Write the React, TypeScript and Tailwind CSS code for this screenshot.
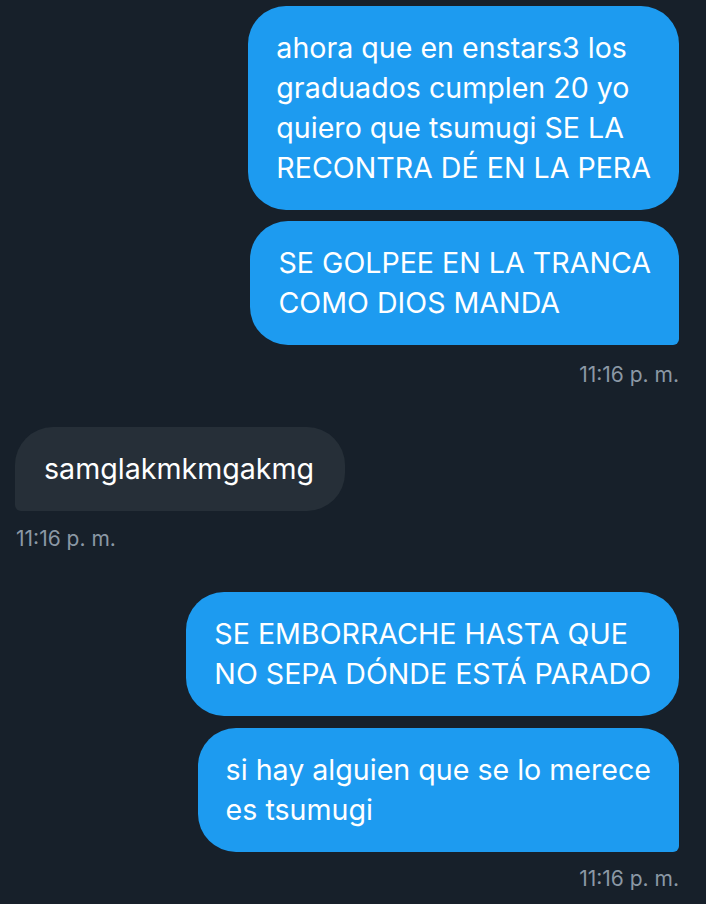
import React from "react";

type Msg = {
  lines: string[];
  corner?: boolean; // last in group: sharp corner on sender side
};

const firstGroup: Msg[] = [
  {
    lines: [
      "ahora que en enstars3 los",
      "graduados cumplen 20 yo",
      "quiero que tsumugi SE LA",
      "RECONTRA DÉ EN LA PERA",
    ],
  },
  { lines: ["SE GOLPEE EN LA TRANCA", "COMO DIOS MANDA"], corner: true },
];

const secondGroup: Msg[] = [
  { lines: ["SE EMBORRACHE HASTA QUE", "NO SEPA DÓNDE ESTÁ PARADO"] },
  { lines: ["si hay alguien que se lo merece", "es tsumugi"], corner: true },
];

function SentBubble({ msg }: { msg: Msg }) {
  return (
    <div
      className={`bg-[#1d9bf0] text-white px-[28px] py-[22px] rounded-[38px] ${
        msg.corner ? "rounded-br-[6px]" : ""
      }`}
    >
      {msg.lines.map((l, i) => (
        <div key={i} className="whitespace-nowrap">
          {l}
        </div>
      ))}
    </div>
  );
}

function Stamp({ right }: { right?: boolean }) {
  return (
    <div className={`flex ${right ? "justify-end pr-[27px]" : "pl-4"}`}>
      <span className="text-[21px] leading-[28px] text-[#8b98a5]">11:16 p. m.</span>
    </div>
  );
}

export default function App() {
  return (
    <div
      className="w-[706px] h-[904px] overflow-hidden bg-[#17202a] text-[28.6px] leading-[40px]"
      style={{ fontFamily: "Inter, 'Noto Sans', sans-serif" }}
    >
      <div className="flex flex-col pt-[6px]">
        {/* first group */}
        <div className="flex flex-col items-end gap-[11px] pr-[27px]">
          {firstGroup.map((m, i) => (
            <SentBubble key={i} msg={m} />
          ))}
        </div>
        <div className="mt-[16px]">
          <Stamp right />
        </div>

        {/* received */}
        <div className="mt-[38px] flex flex-col items-start pl-[15px]">
          <div className="bg-[#262f38] text-white pl-[29px] pr-[31px] py-[22px] rounded-[38px] rounded-bl-[6px] whitespace-nowrap">
            samglakmkmgakmg
          </div>
        </div>
        <div className="mt-[14px]">
          <Stamp />
        </div>

        {/* second group */}
        <div className="mt-[39px] flex flex-col items-end gap-[12px] pr-[27px]">
          {secondGroup.map((m, i) => (
            <SentBubble key={i} msg={m} />
          ))}
        </div>
        <div className="mt-[13px]">
          <Stamp right />
        </div>
      </div>
    </div>
  );
}
